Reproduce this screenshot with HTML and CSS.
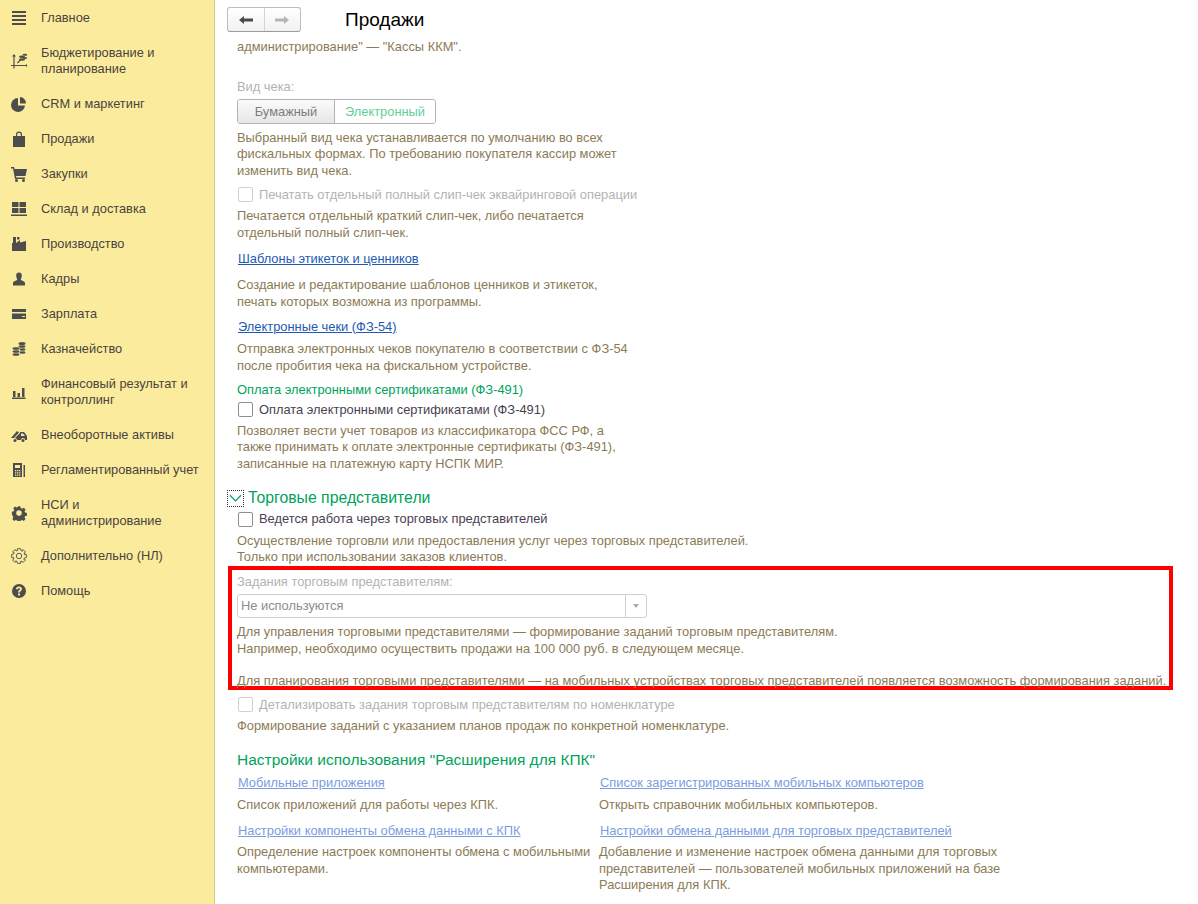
FILE: index.html
```html
<!DOCTYPE html>
<html lang="ru">
<head>
<meta charset="utf-8">
<title>Продажи</title>
<link rel="stylesheet" href="styles.css">
</head>
<body>
<div class="app">
<nav class="sidebar">
  <a class="nav-item"><svg class="ico" viewBox="0 0 16 16"><path d="M1 1h14v2H1zM1 5h14v2H1zM1 9h14v2H1zM1 13h14v2H1z"/></svg><span>Главное</span></a>
  <a class="nav-item"><svg class="ico" viewBox="0 0 16 16"><path d="M3 1l2 2.500H3.600V12H15v-1.200l2 1.700-2 1.700V13H3.600v2.500H2.400V13H0v-1h2.400V3.500H1z"/><path d="M6 9.500l3-3 1 .7-3.200 3.200z"/><ellipse cx="11" cy="6.500" rx="3" ry="1.200"/><ellipse cx="11" cy="3.800" rx="3" ry="1.200"/><ellipse cx="14" cy="1.700" rx="2.500" ry="1"/><ellipse cx="14" cy="5" rx="2.200" ry="1"/></svg><span>Бюджетирование и<br>планирование</span></a>
  <a class="nav-item"><svg class="ico" viewBox="0 0 16 16"><path d="M7 2v7.500h7A7 7 0 1 1 7 2z"/><path d="M9 1a6.500 6.500 0 0 1 6 6.500H9z"/></svg><span>CRM и маркетинг</span></a>
  <a class="nav-item"><svg class="ico" viewBox="0 0 16 16"><path d="M2 5h3V3.500a3 3 0 0 1 6 0V5h3v11H2zM6.200 5h3.600V3.500a1.800 1.800 0 0 0-3.600 0z" fill-rule="evenodd"/></svg><span>Продажи</span></a>
  <a class="nav-item"><svg class="ico" viewBox="0 0 16 16"><path d="M0 1h3l.6 2H16l-1.500 7H5l.3 1.500H14V13H4L2 2.500H0z"/><circle cx="5.500" cy="14.500" r="1.500"/><circle cx="12.500" cy="14.500" r="1.500"/></svg><span>Закупки</span></a>
  <a class="nav-item"><svg class="ico" viewBox="0 0 16 16"><path d="M1 1h6.500v5H1zM8.500 1H15v5H8.500zM1 7h6.500v5H1zM8.500 7H15v5H8.500zM0 13.500h16V15H0z"/></svg><span>Склад и доставка</span></a>
  <a class="nav-item"><svg class="ico" viewBox="0 0 16 16"><path d="M2 1h3v6l4-3v2.500L15 5v10H1V7l1 0z"/><path d="M6 1h2.500v2.500H6z"/></svg><span>Производство</span></a>
  <a class="nav-item"><svg class="ico" viewBox="0 0 16 16"><path d="M8 1.500c1.900 0 2.800 1.300 2.800 3S10.200 7.500 9.700 8.700c.9 1.100 4.300 1.300 4.300 3.300v2.500H2V12c0-2 3.400-2.200 4.300-3.300C5.800 7.500 5.200 6.200 5.200 4.500s.9-3 2.800-3z"/></svg><span>Кадры</span></a>
  <a class="nav-item"><svg class="ico" viewBox="0 0 16 16"><path d="M1 3h14v3H1zM1 7.500h14V13H1zM11 10h3v1h-3z" fill-rule="evenodd"/></svg><span>Зарплата</span></a>
  <a class="nav-item"><svg class="ico" viewBox="0 0 16 16"><ellipse cx="11" cy="2.500" rx="3.500" ry="1.500"/><ellipse cx="11" cy="5.500" rx="3.500" ry="1.300"/><ellipse cx="5" cy="7.500" rx="3.500" ry="1.300"/><ellipse cx="5" cy="10.500" rx="3.500" ry="1.300"/><ellipse cx="5" cy="13.500" rx="3.500" ry="1.300"/><ellipse cx="11.500" cy="8.500" rx="3" ry="1.200"/><ellipse cx="11.500" cy="11.500" rx="3" ry="1.200"/></svg><span>Казначейство</span></a>
  <a class="nav-item"><svg class="ico" viewBox="0 0 16 16"><path d="M2 7h2.500v6H2zM6.500 9H9v4H6.500zM11 4h2.500v9H11zM1 13.500h13.500V15H1z"/></svg><span>Финансовый результат и<br>контроллинг</span></a>
  <a class="nav-item"><svg class="ico" viewBox="0 0 16 16"><path d="M0 11l6-7 2 1.500L3 11zM4 11l5-5v-1h4l3 4v4h-2a2 2 0 0 0-4 0H6a2 2 0 0 0-3.600-1zM10 6.500V9h4l-2-2.500z" fill-rule="evenodd"/><circle cx="4" cy="13.500" r="1.500"/><circle cx="12" cy="13.500" r="1.500"/></svg><span>Внеоборотные активы</span></a>
  <a class="nav-item"><svg class="ico" viewBox="0 0 16 16"><path d="M2 1h9v14H2zM4 3v3h5V3zM4 8v1.300h1.300V8zM6 8v1.300h1.300V8zM8 8v1.300h1.300V8zM4 10.200v1.300h1.300v-1.300zM6 10.200v1.300h1.300v-1.300zM8 10.200v1.300h1.300v-1.300zM4 12.400v1.300h1.300v-1.300zM6 12.400v1.300h1.300v-1.300zM8 12.400v1.300h1.300v-1.300z" fill-rule="evenodd"/><path d="M12.500 3H14v12h-1.500z"/></svg><span>Регламентированный учет</span></a>
  <a class="nav-item"><svg class="ico" viewBox="0 0 16 16"><path d="M6.500 1h3l.4 2 1.500.7 1.800-1.100 2 2-1.100 1.800.7 1.500 1.900.4v3l-1.900.4-.7 1.500 1.100 1.800-2 2-1.800-1.100-1.500.7-.4 1.900h-3l-.4-1.900-1.500-.7-1.800 1.100-2-2 1.100-1.800-.7-1.500L.3 10V7l1.900-.4.700-1.500L1.800 3.300l2-2 1.800 1.100 1.500-.7zM8 5.500a3 3 0 1 0 0 6 3 3 0 0 0 0-6z" fill-rule="evenodd" transform="translate(.6 .3) scale(.92)"/></svg><span>НСИ и<br>администрирование</span></a>
  <a class="nav-item"><svg class="ico" viewBox="0 0 16 16"><g class="gear-line"><path id="gt" d="M6 2.550L6.550.6h2.900L10 2.550l.45.19A5.800 5.800 0 0 1 11.450 3.350"/><use href="#gt" transform="rotate(45 8 8)"/><use href="#gt" transform="rotate(90 8 8)"/><use href="#gt" transform="rotate(135 8 8)"/><use href="#gt" transform="rotate(180 8 8)"/><use href="#gt" transform="rotate(225 8 8)"/><use href="#gt" transform="rotate(270 8 8)"/><use href="#gt" transform="rotate(315 8 8)"/><circle cx="8" cy="8" r="2.700"/></g></svg><span>Дополнительно (НЛ)</span></a>
  <a class="nav-item"><svg class="ico" viewBox="0 0 16 16"><path fill-rule="evenodd" d="M8 1a7 7 0 1 1 0 14A7 7 0 0 1 8 1zM7 10.500v2h2v-2zM8 3.500c-1.800 0-3 1-3.100 2.700h1.900c.1-.7.500-1 1.100-1 .6 0 1.100.4 1.100.9 0 1.100-2 1.200-2 3.400h2c0-1.500 2-1.700 2-3.500 0-1.600-1.300-2.500-3-2.500z"/></svg><span>Помощь</span></a>
</nav>
<main class="main">
  <header class="topbar">
    <div class="history">
      <button class="hist-btn"><svg viewBox="0 0 14 10" class="arrow"><path d="M0 5l5-4v2.500h9v3H5V9z"/></svg></button>
      <button class="hist-btn hist-off"><svg viewBox="0 0 14 10" class="arrow"><path d="M14 5L9 1v2.500H0v3h9V9z"/></svg></button>
    </div>
    <h1 class="page-title">Продажи</h1>
  </header>
  <div class="content">
    <p class="hint">администрирование" — "Кассы ККМ".</p>

    <p class="label-off m-vid">Вид чека:</p>
    <div class="toggle"><span class="toggle-a">Бумажный</span><span class="toggle-b">Электронный</span></div>
    <p class="hint m-t5">Выбранный вид чека устанавливается по умолчанию во всех<br>фискальных формах. По требованию покупателя кассир может<br>изменить вид чека.</p>
    <label class="check check-off m-c1"><i class="box"></i>Печатать отдельный полный слип-чек эквайринговой операции</label>
    <p class="hint m-t5">Печатается отдельный краткий слип-чек, либо печатается<br>отдельный полный слип-чек.</p>
    <p class="link m-l1">Шаблоны этикеток и ценников</p>
    <p class="hint m-t9">Создание и редактирование шаблонов ценников и этикеток,<br>печать которых возможна из программы.</p>
    <p class="link m-l2">Электронные чеки (ФЗ-54)</p>
    <p class="hint m-t6">Отправка электронных чеков покупателю в соответствии с ФЗ-54<br>после пробития чека на фискальном устройстве.</p>
    <p class="green-label">Оплата электронными сертификатами (ФЗ-491)</p>
    <label class="check m-c2"><i class="box"></i>Оплата электронными сертификатами (ФЗ-491)</label>
    <p class="hint m-t5">Позволяет вести учет товаров из классификатора ФСС РФ, а<br>также принимать к оплате электронные сертификаты (ФЗ-491),<br>записанные на платежную карту НСПК МИР.</p>

    <div class="group-head"><span class="chev"><svg viewBox="0 0 14 9"><path d="M1 1l6 6 6-6" fill="none" stroke="#00a35c" stroke-width="1.300"/></svg></span><h2 class="group-title">Торговые представители</h2></div>
    <label class="check m-c3"><i class="box"></i>Ведется работа через торговых представителей</label>
    <p class="hint m-t5">Осуществление торговли или предоставления услуг через торговых представителей.<br>Только при использовании заказов клиентов.</p>

    <section class="marked">
      <p class="label-off">Задания торговым представителям:</p>
      <div class="select"><span class="select-val">Не используются</span><span class="select-btn"><i class="caret"></i></span></div>
      <p class="hint m-t7">Для управления торговыми представителями — формирование заданий торговым представителям.<br>Например, необходимо осуществить продажи на 100 000 руб. в следующем месяце.<br><br>Для планирования торговыми представителями — на мобильных устройствах торговых представителей появляется возможность формирования заданий.</p>
    </section>

    <label class="check check-off m-c4"><i class="box"></i>Детализировать задания торговым представителям по номенклатуре</label>
    <p class="hint m-t5">Формирование заданий с указанием планов продаж по конкретной номенклатуре.</p>

    <h2 class="section-title">Настройки использования "Расширения для КПК"</h2>
    <div class="cols">
      <div class="col">
        <p class="link link-pale">Мобильные приложения</p>
        <p class="hint m-t6">Список приложений для работы через КПК.</p>
        <p class="link link-pale m-l3">Настройки компоненты обмена данными с КПК</p>
        <p class="hint m-t5">Определение настроек компоненты обмена с мобильными<br>компьютерами.</p>
      </div>
      <div class="col">
        <p class="link link-pale">Список зарегистрированных мобильных компьютеров</p>
        <p class="hint m-t6">Открыть справочник мобильных компьютеров.</p>
        <p class="link link-pale m-l3">Настройки обмена данными для торговых представителей</p>
        <p class="hint m-t5">Добавление и изменение настроек обмена данными для торговых<br>представителей — пользователей мобильных приложений на базе<br>Расширения для КПК.</p>
      </div>
    </div>
  </div>
</main>
</div>
</body>
</html>
```

FILE: styles.css
```css
* { box-sizing: border-box; }
html, body { margin: 0; height: 100%; overflow: hidden; background: #fff; }
body { font-family: "Liberation Sans", Arial, sans-serif; font-size: 12.87px; color: #4b4b4b; }
p, h1, h2 { margin: 0; font-weight: normal; }

.app { display: flex; height: 904px; }

.sidebar { width: 215px; flex: none; background: #fbec9d; border-right: 1px solid #d9c97a; }
.nav-item {
  display: flex; align-items: center; height: 35px; padding-left: 11px; color: #4a4340;
  font-size: 12.8px; line-height: 16px;
}
.nav-item:has(br) { height: 51px; }
.ico { width: 16px; height: 16px; flex: none; margin-right: 14px; fill: #4d4d4d; }
.gear-line { fill: none; stroke: #4d4d4d; stroke-width: .9; }

.main { flex: 1; min-width: 0; display: flex; flex-direction: column; }
.topbar { height: 36px; flex: none; display: flex; align-items: flex-start; padding: 7px 0 0 12px; }
.history {
  display: flex; width: 74px; height: 25px; border: 1px solid #bdbdbd; border-radius: 3px;
  border-bottom-color: #9a9a9a;
  background: linear-gradient(#fff, #f1f1f1);
}
.hist-btn { flex: 1; padding: 0; border: 0; background: none; display: flex; align-items: center; justify-content: center; }
.hist-off { border-left: 1px solid #d4d4d4; }
.arrow { width: 14px; height: 10px; fill: #4a4a4a; }
.hist-off .arrow { fill: #b5b5b5; }
.page-title { margin-left: 44px; font-size: 19px; line-height: 26px; color: #000; }

.content { flex: 1; min-height: 0; overflow: hidden; padding: 3px 0 0 22px; }

.hint { color: #8b7b55; line-height: 16.4px; }
.label-off { color: #b3b3b3; line-height: 16px; }
.m-vid { margin-top: 24px; }
.toggle {
  display: inline-flex; margin-top: 4px; height: 25px; border: 1px solid #b3b3b3; border-radius: 3px;
  line-height: 23px; overflow: hidden; vertical-align: top;
}
.toggle-a { width: 97px; text-align: center; color: #7d7d7d; background: linear-gradient(#fbfbfb, #e6e6e6); border-right: 1px solid #b3b3b3; }
.toggle-b { width: 100px; text-align: center; color: #62cf97; background: #fff; }
.m-t5 { margin-top: 5.5px; }
.m-t6 { margin-top: 6.5px; }
.m-t7 { margin-top: 6px; }
.m-t9 { margin-top: 10px; }

.check { display: flex; align-items: center; height: 16px; padding-left: 1px; color: #4a3f52; line-height: 16px; }
.check-off { color: #b3b3b3; }
.box { width: 15px; height: 15px; margin-right: 6px; flex: none; border: 1px solid #8f8f8f; border-radius: 2px; background: #fff; }
.check-off .box { border-color: #d0d0d0; }
.m-c1 { margin-top: 7.5px; }
.m-c2 { margin-top: 3.5px; }
.m-c3 { margin-top: 3px; }
.m-c4 { margin-top: 6.5px; }

.link { padding-left: 1px; color: #1c5ab4; text-decoration: underline; line-height: 16px; }
.link-pale { color: #7a9de0; }
.m-l1 { margin-top: 10.5px; }
.m-l2 { margin-top: 8.5px; }
.m-l3 { margin-top: 9.5px; }
.green-label { margin-top: 8px; color: #00a35c; line-height: 16px; }

.group-head { display: flex; align-items: center; margin: 16px 0 0 -10px; height: 20px; }
.chev { width: 17px; height: 17px; border: 1px dotted #333; display: flex; align-items: center; justify-content: center; }
.chev svg { width: 13px; height: 9px; }
.group-title { margin-left: 4px; font-size: 15.8px; color: #00a35c; line-height: 20px; }

.marked {
  width: 945px; height: 124px; margin: .5px 0 0 -9px; padding: 4px 0 0 5px; border: 4px solid #f00;
}
.select {
  display: flex; width: 410px; height: 24px; margin-top: 4px; border: 1px solid #d0d0d0; border-radius: 3px; line-height: 21px;
}
.select-val { flex: 1; padding-left: 3px; color: #8c8c8c; }
.select-btn { width: 21px; border-left: 1px solid #d0d0d0; display: flex; align-items: center; justify-content: center; }
.caret { width: 0; height: 0; border: 3px solid transparent; border-top: 4px solid #aaa; border-bottom: 0; }

.section-title { margin-top: 15px; font-size: 15.5px; line-height: 20px; color: #00a35c; }
.cols { display: flex; margin-top: 5px; }
.col { flex: none; width: 362px; }
.col + .col { width: 420px; }
```
